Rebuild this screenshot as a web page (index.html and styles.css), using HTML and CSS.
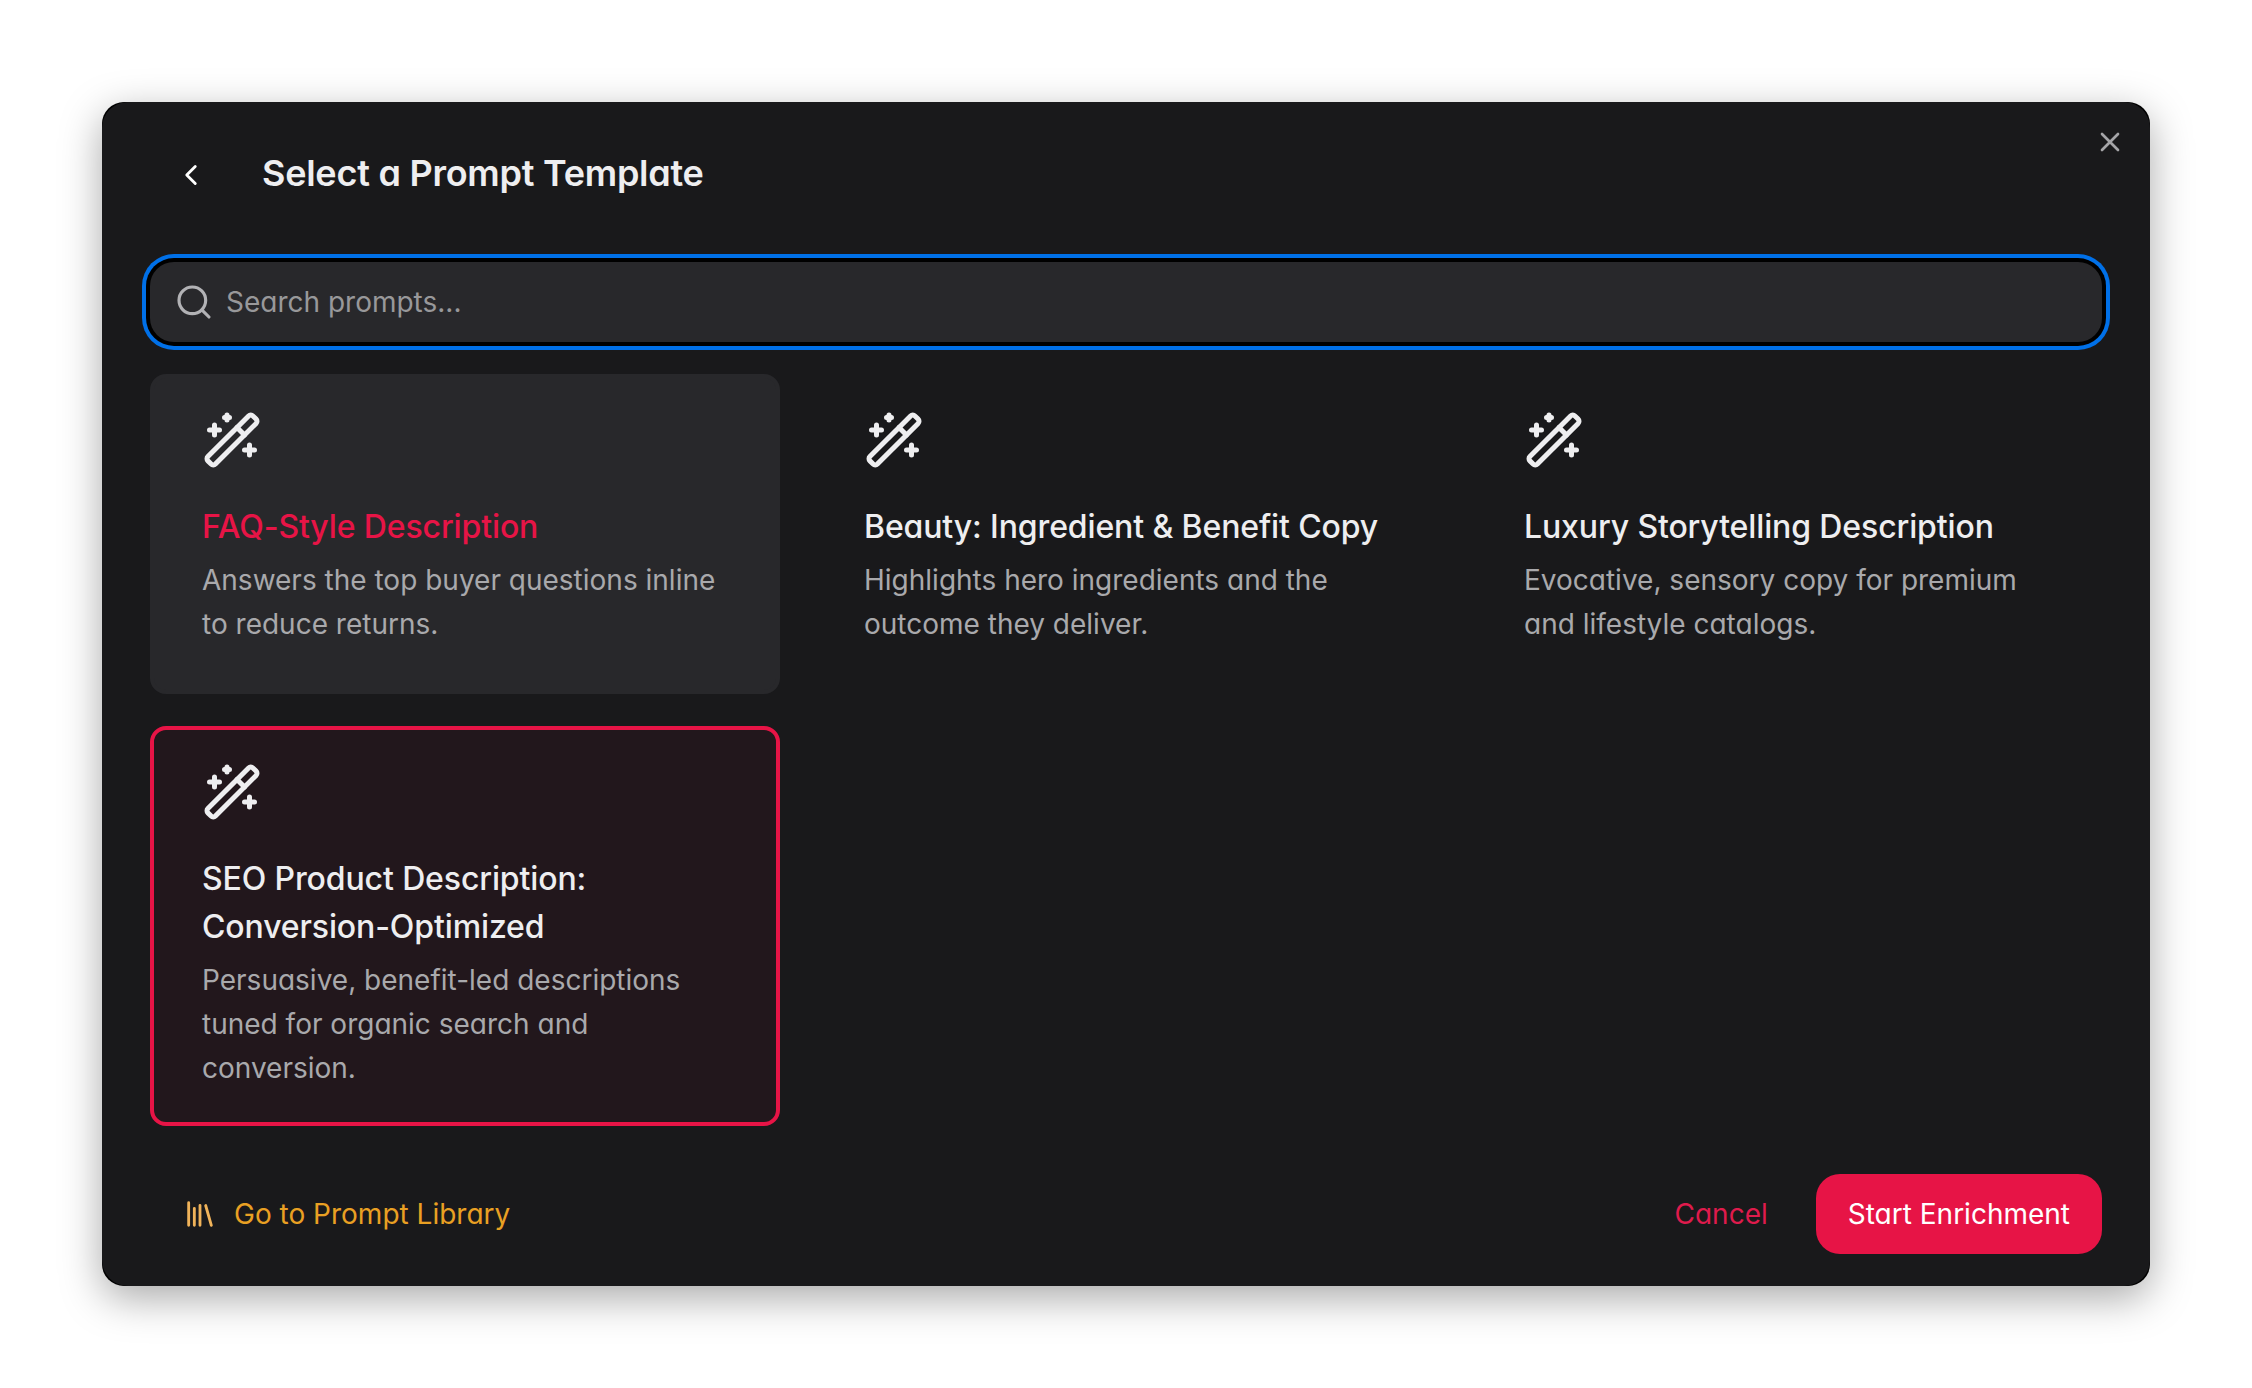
FILE: index.html
```
<!DOCTYPE html>
<html lang="en">
<head>
    <meta charset="UTF-8">
    <meta name="viewport" content="width=device-width, initial-scale=1.0">
    <title>Select a Prompt Template</title>
    <link rel="stylesheet" href="styles.css">
</head>
<body>
    <!-- shared icon for the template cards -->
    <svg class="sprite" width="0" height="0">
        <symbol id="wand" viewBox="0 0 24 24">
            <path d="m21.64 3.64-1.28-1.28a1.21 1.21 0 0 0-1.72 0L2.36 18.64a1.21 1.21 0 0 0 0 1.72l1.28 1.28a1.2 1.2 0 0 0 1.72 0L21.64 5.36a1.2 1.2 0 0 0 0-1.72"/>
            <path d="m14 7 3 3M5 6v4M19 14v4M10 2v2M7 8H3M21 16h-4M11 3H9"/>
        </symbol>
    </svg>

    <div class="window">
        <div class="modal">
            <button class="close" aria-label="Close">
                <svg class="icon" viewBox="0 0 24 24"><path d="M18 6 6 18M6 6l12 12"/></svg>
            </button>

            <header>
                <button class="back" aria-label="Back">
                    <svg class="icon" viewBox="0 0 24 24"><path d="m15 18-6-6 6-6"/></svg>
                </button>
                <h1>Select a Prompt Template</h1>
            </header>

            <div class="search">
                <svg class="icon" viewBox="0 0 24 24"><circle cx="11" cy="11" r="8"/><path d="m21 21-4.3-4.3"/></svg>
                <input type="text" placeholder="Search prompts...">
            </div>

            <div class="templates">
                <div class="card hovered">
                    <svg class="icon"><use href="#wand"/></svg>
                    <h2>FAQ-Style Description</h2>
                    <p>Answers the top buyer questions inline to reduce returns.</p>
                </div>
                <div class="card">
                    <svg class="icon"><use href="#wand"/></svg>
                    <h2>Beauty: Ingredient &amp; Benefit Copy</h2>
                    <p>Highlights hero ingredients and the outcome they deliver.</p>
                </div>
                <div class="card">
                    <svg class="icon"><use href="#wand"/></svg>
                    <h2>Luxury Storytelling Description</h2>
                    <p>Evocative, sensory copy for premium and lifestyle catalogs.</p>
                </div>
                <div class="card selected">
                    <svg class="icon"><use href="#wand"/></svg>
                    <h2>SEO Product Description: Conversion-Optimized</h2>
                    <p>Persuasive, benefit-led descriptions tuned for organic search and conversion.</p>
                </div>
            </div>

            <footer>
                <a class="library" href="#">
                    <svg class="icon" viewBox="0 0 24 24"><path d="m16 6 4 14M12 6v14M8 8v12M4 4v16"/></svg>
                    Go to Prompt Library
                </a>
                <div class="actions">
                    <button class="cancel">Cancel</button>
                    <button class="start">Start Enrichment</button>
                </div>
            </footer>
        </div>
    </div>
</body>
</html>
```
FILE: styles.css
```
* {
    box-sizing: border-box;
}

body {
    font-family: 'Inter', sans-serif;
    font-feature-settings: 'cv11';
    margin: 0;
    padding: 102px;
    background-color: #fff;
    color: #eeeef0;
}

h1, h2, p {
    margin: 0;
}

button {
    font: inherit;
    font-feature-settings: inherit;
    padding: 0;
    border: none;
    background: none;
    color: inherit;
    cursor: pointer;
}

.sprite {
    position: absolute;
}

.icon {
    display: block;
    flex: none;
    fill: none;
    stroke: currentColor;
    stroke-width: 2;
    stroke-linecap: round;
    stroke-linejoin: round;
}

/* black backing shows as a thin edge round the corners */
.window {
    width: 2048px;
    border-radius: 22px;
    background-color: #000;
    box-shadow: 0 12px 42px rgba(0, 0, 0, 0.34);
}

.modal {
    position: relative;
    display: flex;
    flex-direction: column;
    height: 1184px;
    padding: 32px 48px;
    border-radius: 26px;
    background-color: #19191b;
    font-size: 28px;
}

.close {
    position: absolute;
    top: 24px;
    right: 24px;
    color: #a5a5a8;
}

.close .icon {
    width: 32px;
    height: 32px;
}

header {
    display: flex;
    align-items: center;
    gap: 54px;
    height: 80px;
    padding-left: 24px;
}

.back {
    padding-top: 2px;
    color: #fff;
}

.back .icon {
    width: 34px;
    height: 34px;
}

h1 {
    padding-bottom: 2px;
    font-size: 36px;
    font-weight: 600;
    line-height: 48px;
    letter-spacing: -0.25px;
}

.search {
    display: flex;
    align-items: center;
    gap: 12px;
    height: 80px;
    margin-top: 48px;
    padding: 0 24px;
    border-radius: 24px;
    background-color: #28282b;
    box-shadow: 0 0 0 4px #000, 0 0 0 8px #0070e8;
    color: #b2b2b5;
}

.search .icon {
    width: 40px;
    height: 40px;
    stroke-width: 1.9;
}

.search input {
    flex: 1;
    padding: 0;
    border: none;
    outline: none;
    background: none;
    color: inherit;
    font: inherit;
    font-feature-settings: inherit;
}

.search input::placeholder {
    color: #98989a;
}

.templates {
    display: grid;
    grid-template-columns: 630px 628px 630px;
    gap: 32px;
    margin-top: 32px;
}

.card {
    min-height: 320px;
    padding: 32px 48px;
    border: 4px solid transparent;
    border-radius: 16px;
}

.card .icon {
    width: 60px;
    height: 60px;
    margin-bottom: 33px;
}

.card h2 {
    margin-bottom: 7px;
    font-size: 32px;
    font-weight: 500;
    line-height: 48px;
    letter-spacing: -0.12px;
}

.card p {
    color: #a9a9ac;
    line-height: 44px;
}

.card.hovered {
    border-color: #28282b;
    background-color: #28282b;
}

.card.hovered h2 {
    color: #e71446;
}

.card.selected {
    border-color: #e71446;
    background-color: #22171c;
}

footer {
    display: flex;
    align-items: center;
    justify-content: space-between;
    margin-top: auto;
    padding-left: 33px;
}

.library {
    display: flex;
    align-items: center;
    gap: 17px;
    color: #e9a023;
    text-decoration: none;
}

.library .icon {
    width: 34px;
    height: 34px;
    color: #f0b35a;
}

.actions {
    display: flex;
    gap: 16px;
}

.cancel {
    padding: 0 32px;
    color: #df1b4c;
}

.start {
    height: 80px;
    padding: 0 32px;
    border-radius: 24px;
    background-color: #e71446;
    color: #fff;
}
```
